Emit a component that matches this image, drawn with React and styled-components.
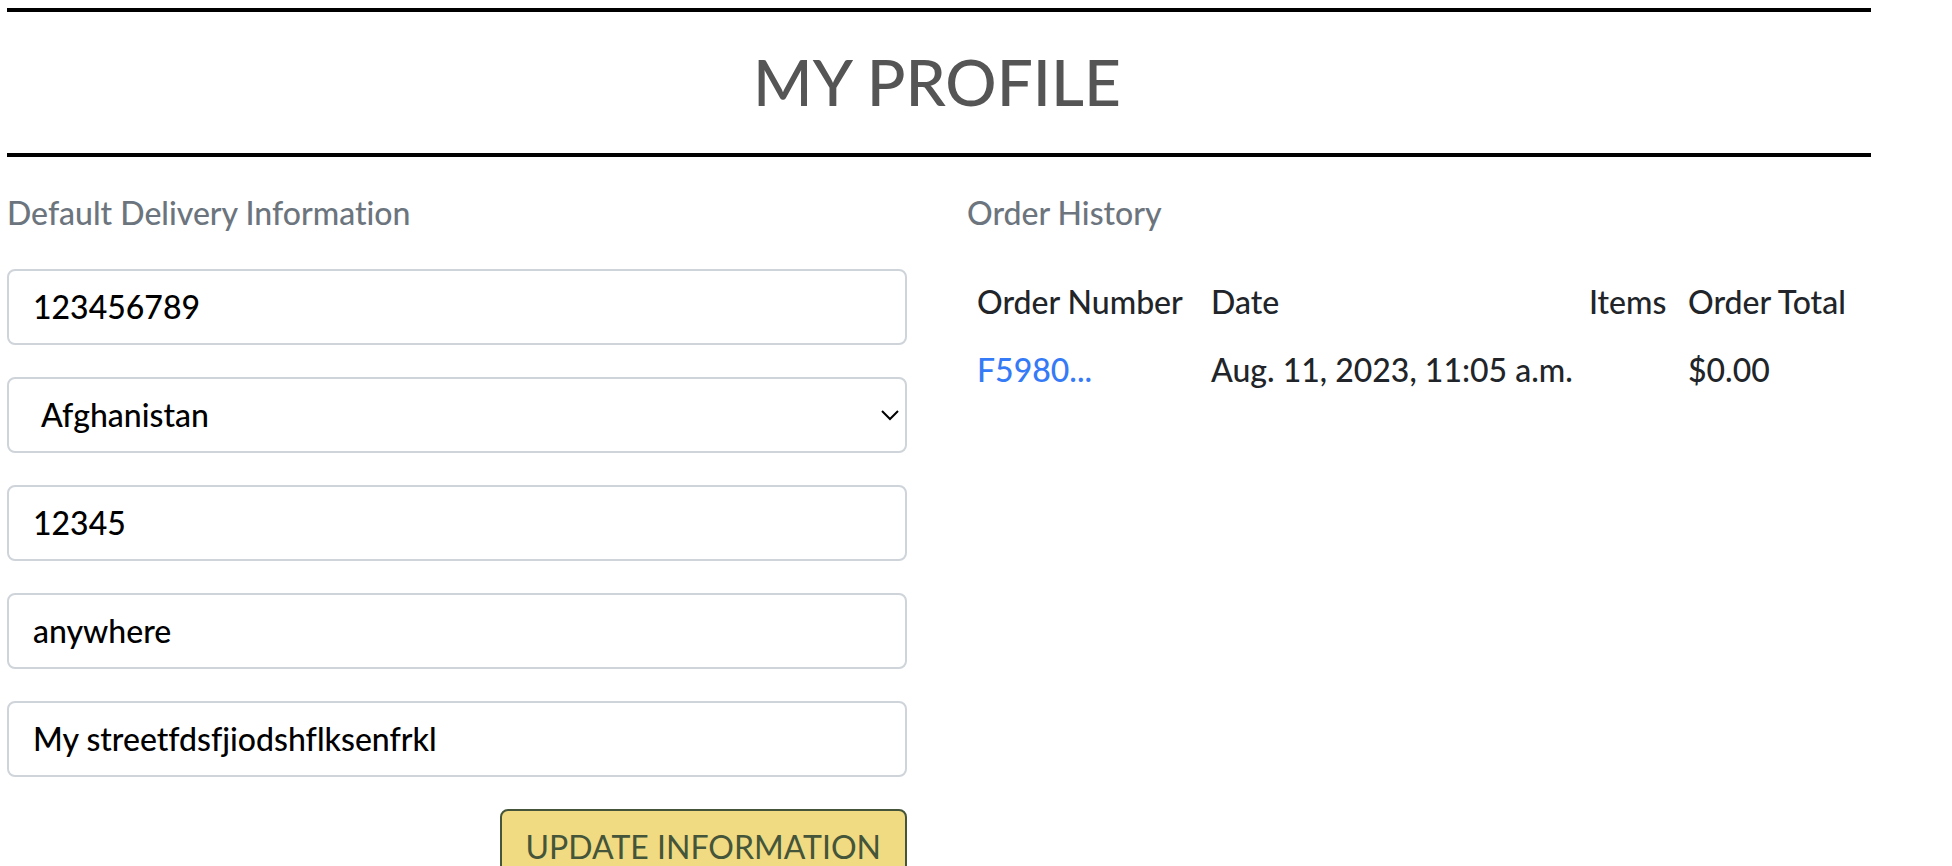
import React from "react";
import styled, { createGlobalStyle } from "styled-components";

const Global = createGlobalStyle`
  *, *::before, *::after { box-sizing: border-box; }
  body {
    margin: 0;
    overflow: hidden;
    background: #fff;
    color: #212529;
    font-family: Lato, sans-serif;
    font-size: 32px;
    font-weight: 500;
    line-height: 48px;
    font-variant-ligatures: none;
  }
`;

const Page = styled.main`
  padding: 8px 81px 0 7px;
`;

const Banner = styled.header`
  border-top: 4px solid #000;
  border-bottom: 4px solid #000;
  padding: 32px 4px 33px 0;
`;

const Title = styled.h1`
  margin: 0;
  font-size: 64px;
  line-height: 76px;
  font-weight: 500;
  text-align: center;
  color: #555;
`;

const Columns = styled.div`
  display: grid;
  grid-template-columns: 1fr 1fr;
  gap: 60px;
  padding: 32px 4px 0 0;
`;

const Heading = styled.h2`
  margin: 0 0 32px;
  font-size: 32px;
  line-height: 48px;
  font-weight: 500;
  color: #6c757d;
`;

const Form = styled.form`
  display: flex;
  flex-direction: column;
  gap: 32px;
`;

const fieldStyles = `
  width: 100%;
  height: 76px;
  border: 2px solid #ced4da;
  border-radius: 8px;
  background: #fff;
  color: #000;
  font: inherit;
  font-variant-ligatures: none;
`;

const Field = styled.input`
  ${fieldStyles}
  padding: 11px 24px 13px;
`;

const SelectWrap = styled.div`
  position: relative;
`;

const Select = styled.select`
  ${fieldStyles}
  display: block;
  appearance: none;
  padding: 12px 32px;
`;

const Chevron = styled.svg`
  position: absolute;
  right: 7px;
  top: 28px;
  width: 20px;
  height: 20px;
  pointer-events: none;
`;

const Submit = styled.button`
  align-self: flex-end;
  padding: 12px 24px;
  border: 2px solid #445539;
  border-radius: 8px;
  background: #f0da82;
  color: #445539;
  font: inherit;
  font-weight: 400;
  text-transform: uppercase;
`;

const Orders = styled.table`
  width: 100%;
  table-layout: fixed;
  border-collapse: collapse;
`;

const Column = styled.col`
  width: ${({ $share }) => $share}%;
`;

const Cell = styled.td`
  padding: 9px 10px 11px;
  font-weight: 500;
  text-align: left;
  white-space: nowrap;
`;

const OrderLink = styled.a`
  color: #357af6;
  text-decoration: none;
`;

export default function App() {
  return (
    <>
      <Global />
      <Page>
        <Banner><Title>MY PROFILE</Title></Banner>
        <Columns>
          <section>
            <Heading>Default Delivery Information</Heading>
            <Form>
              <Field aria-label="Phone Number" defaultValue="123456789" />
              <SelectWrap>
                <Select aria-label="Country" defaultValue="AF">
                  <option value="AF">Afghanistan</option>
                </Select>
                <Chevron viewBox="0 0 20 20" aria-hidden="true">
                  <path d="M2 6l8 8 8-8" fill="none" stroke="#000" strokeWidth="2" />
                </Chevron>
              </SelectWrap>
              <Field aria-label="Postal Code" defaultValue="12345" />
              <Field aria-label="Town or City" defaultValue="anywhere" />
              <Field aria-label="Street Address" defaultValue="My streetfdsfjiodshflksenfrkl" />
              <Submit type="button">Update Information</Submit>
            </Form>
          </section>
          <section>
            <Heading>Order History</Heading>
            <Orders>
              <colgroup>
                <Column $share={26} />
                <Column $share={42} />
                <Column $share={11} />
                <Column $share={21} />
              </colgroup>
              <thead>
                <tr>
                  <Cell as="th" scope="col">Order Number</Cell>
                  <Cell as="th" scope="col">Date</Cell>
                  <Cell as="th" scope="col">Items</Cell>
                  <Cell as="th" scope="col">Order Total</Cell>
                </tr>
              </thead>
              <tbody>
                <tr>
                  <Cell><OrderLink href="#order">F5980...</OrderLink></Cell>
                  <Cell>Aug. 11, 2023, 11:05 a.m.</Cell>
                  <Cell />
                  <Cell>$0.00</Cell>
                </tr>
              </tbody>
            </Orders>
          </section>
        </Columns>
      </Page>
    </>
  );
}
